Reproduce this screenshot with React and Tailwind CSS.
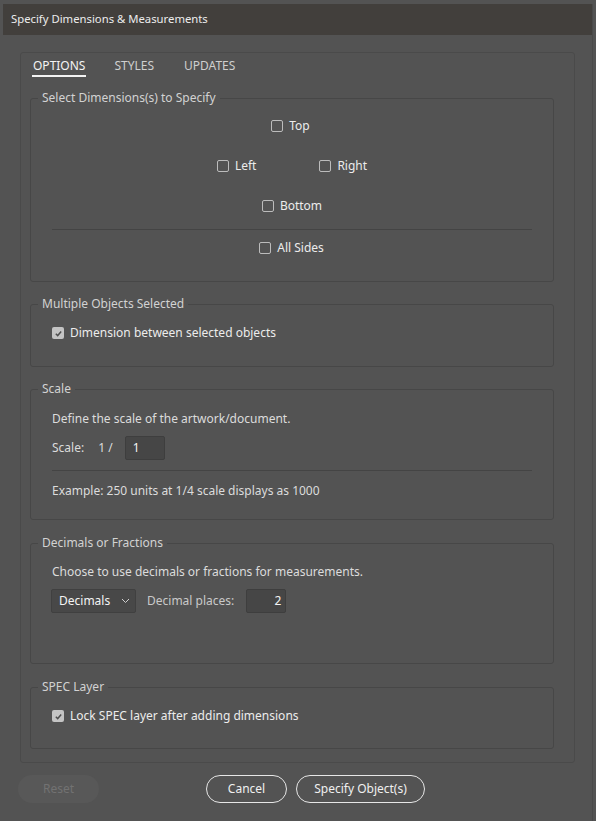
import React from "react";

const FONT = { fontFamily: '"Noto Sans", "Open Sans", sans-serif' };

function Box({ checked }) {
  if (checked) {
    return (
      <span className="w-[12px] h-[12px] rounded-[2px] bg-[#c4c4c4] flex items-center justify-center shrink-0">
        <svg width="9" height="9" viewBox="0 0 10 10">
          <path d="M2 5.2 L4.1 7.3 L8 2.8" fill="none" stroke="#4e4e4e" strokeWidth="1.6" />
        </svg>
      </span>
    );
  }
  return <span className="w-[12px] h-[12px] rounded-[2px] border border-[#bcbcbc] shrink-0" />;
}

function Check({ label, checked }) {
  return (
    <div className="flex items-center gap-[6px] h-[20px]">
      <Box checked={checked} />
      <span className="text-[12px] leading-[16px] text-[#ececec]">{label}</span>
    </div>
  );
}

function Group({ title, className = "", children }) {
  return (
    <fieldset className={`border border-[#474747] rounded-[3px] p-0 m-0 min-w-0 ${className}`}>
      <legend className="ml-[7px] px-[4px] text-[12px] leading-[16px] text-[#d2d2d2]">{title}</legend>
      {children}
    </fieldset>
  );
}

export default function App() {
  return (
    <div style={FONT} className="w-[596px] h-[821px] bg-[#535353] pt-[4px] px-[3px] overflow-hidden">
      <div className="h-[817px] border-r border-[#4a4a4a] flex flex-col">
        <div className="h-[31px] bg-[#423f3c] flex items-center pl-[8px] text-[11.3px] text-[#ececec]">
          Specify Dimensions &amp; Measurements
        </div>

        <div className="mt-[17px] ml-[17px] mr-[17px] border border-[#4a4a4a] rounded-[3px] pl-[9px] pr-[20px] pt-[5px] pb-[13px]">
          <div className="flex gap-[29px] pl-[3px] text-[12px] leading-[16px]">
            <div className="flex flex-col">
              <span className="text-[#f4f4f4]">OPTIONS</span>
              <span className="h-[2px] mt-[1px] -mx-[1px] bg-[#f4f4f4]" />
            </div>
            <span className="text-[#cfcfcf]">STYLES</span>
            <span className="ml-[1px] text-[#cfcfcf]">UPDATES</span>
          </div>

          <Group title="Select Dimensions(s) to Specify" className="mt-[13px]">
            <div className="px-[21px] pt-[10px] pb-[23px] flex flex-col items-center">
              <div className="-ml-[3px]">
                <Check label="Top" />
              </div>
              <div className="mt-[20px] flex gap-[63px]">
                <Check label="Left" />
                <Check label="Right" />
              </div>
              <div className="mt-[20px]">
                <Check label="Bottom" />
              </div>
              <div className="mt-[13px] self-stretch h-px bg-[#444444]" />
              <div className="mt-[8px] -ml-[1px]">
                <Check label="All Sides" />
              </div>
            </div>
          </Group>

          <Group title="Multiple Objects Selected" className="mt-[14px]">
            <div className="px-[21px] pt-[11px] pb-[23px]">
              <Check label="Dimension between selected objects" checked />
            </div>
          </Group>

          <Group title="Scale" className="mt-[14px]">
            <div className="px-[21px] pt-[12px] pb-[18px] text-[12px] leading-[16px] text-[#dcdcdc]">
              <div className="h-[20px] flex items-center">Define the scale of the artwork/document.</div>
              <div className="mt-[7px] h-[24px] flex items-center">
                <span>Scale:</span>
                <span className="ml-[14px]">1 /</span>
                <div className="ml-[12px] w-[40px] h-[24px] bg-[#464646] border border-[#3e3e3e] rounded-[2px] flex items-center pl-[7px] text-[#f4f4f4]">
                  1
                </div>
              </div>
              <div className="mt-[10px] h-px bg-[#444444]" />
              <div className="mt-[10px] h-[20px] flex items-center">Example: 250 units at 1/4 scale displays as 1000</div>
            </div>
          </Group>

          <Group title="Decimals or Fractions" className="mt-[15px]">
            <div className="px-[21px] pt-[11px] pb-[50px] text-[12px] leading-[16px] text-[#dcdcdc]">
              <div className="h-[20px] flex items-center">Choose to use decimals or fractions for measurements.</div>
              <div className="mt-[7px] -ml-[1px] h-[24px] flex items-center">
                <div className="w-[85px] h-[24px] bg-[#484848] border border-[#404040] rounded-[2px] flex items-center justify-between pl-[7px] pr-[5px] text-[#f4f4f4]">
                  <span>Decimals</span>
                  <svg width="9" height="6" viewBox="0 0 9 6">
                    <path d="M1 1 L4.5 4.5 L8 1" fill="none" stroke="#cfcfcf" strokeWidth="1" />
                  </svg>
                </div>
                <span className="ml-[11px] text-[#c9c9c9]">Decimal places:</span>
                <div className="ml-[12px] w-[40px] h-[24px] bg-[#464646] border border-[#3e3e3e] rounded-[2px] flex items-center justify-end pr-[4px] text-[#f4f4f4]">
                  2
                </div>
              </div>
            </div>
          </Group>

          <Group title="SPEC Layer" className="mt-[15px]">
            <div className="px-[21px] pt-[11px] pb-[22px]">
              <Check label="Lock SPEC layer after adding dimensions" checked />
            </div>
          </Group>
        </div>

        <div className="mt-[12px] flex items-center text-[12px]">
          <div className="ml-[15px] w-[81px] h-[28px] rounded-full bg-[#585858] flex items-center justify-center text-[#727272]">
            Reset
          </div>
          <div className="ml-[107px] w-[81px] h-[28px] rounded-full border border-[#e6e6e6] flex items-center justify-center text-[#f0f0f0]">
            Cancel
          </div>
          <div className="ml-[9px] w-[129px] h-[28px] rounded-full border border-[#e6e6e6] flex items-center justify-center text-[#f0f0f0]">
            Specify Object(s)
          </div>
        </div>
      </div>
    </div>
  );
}
